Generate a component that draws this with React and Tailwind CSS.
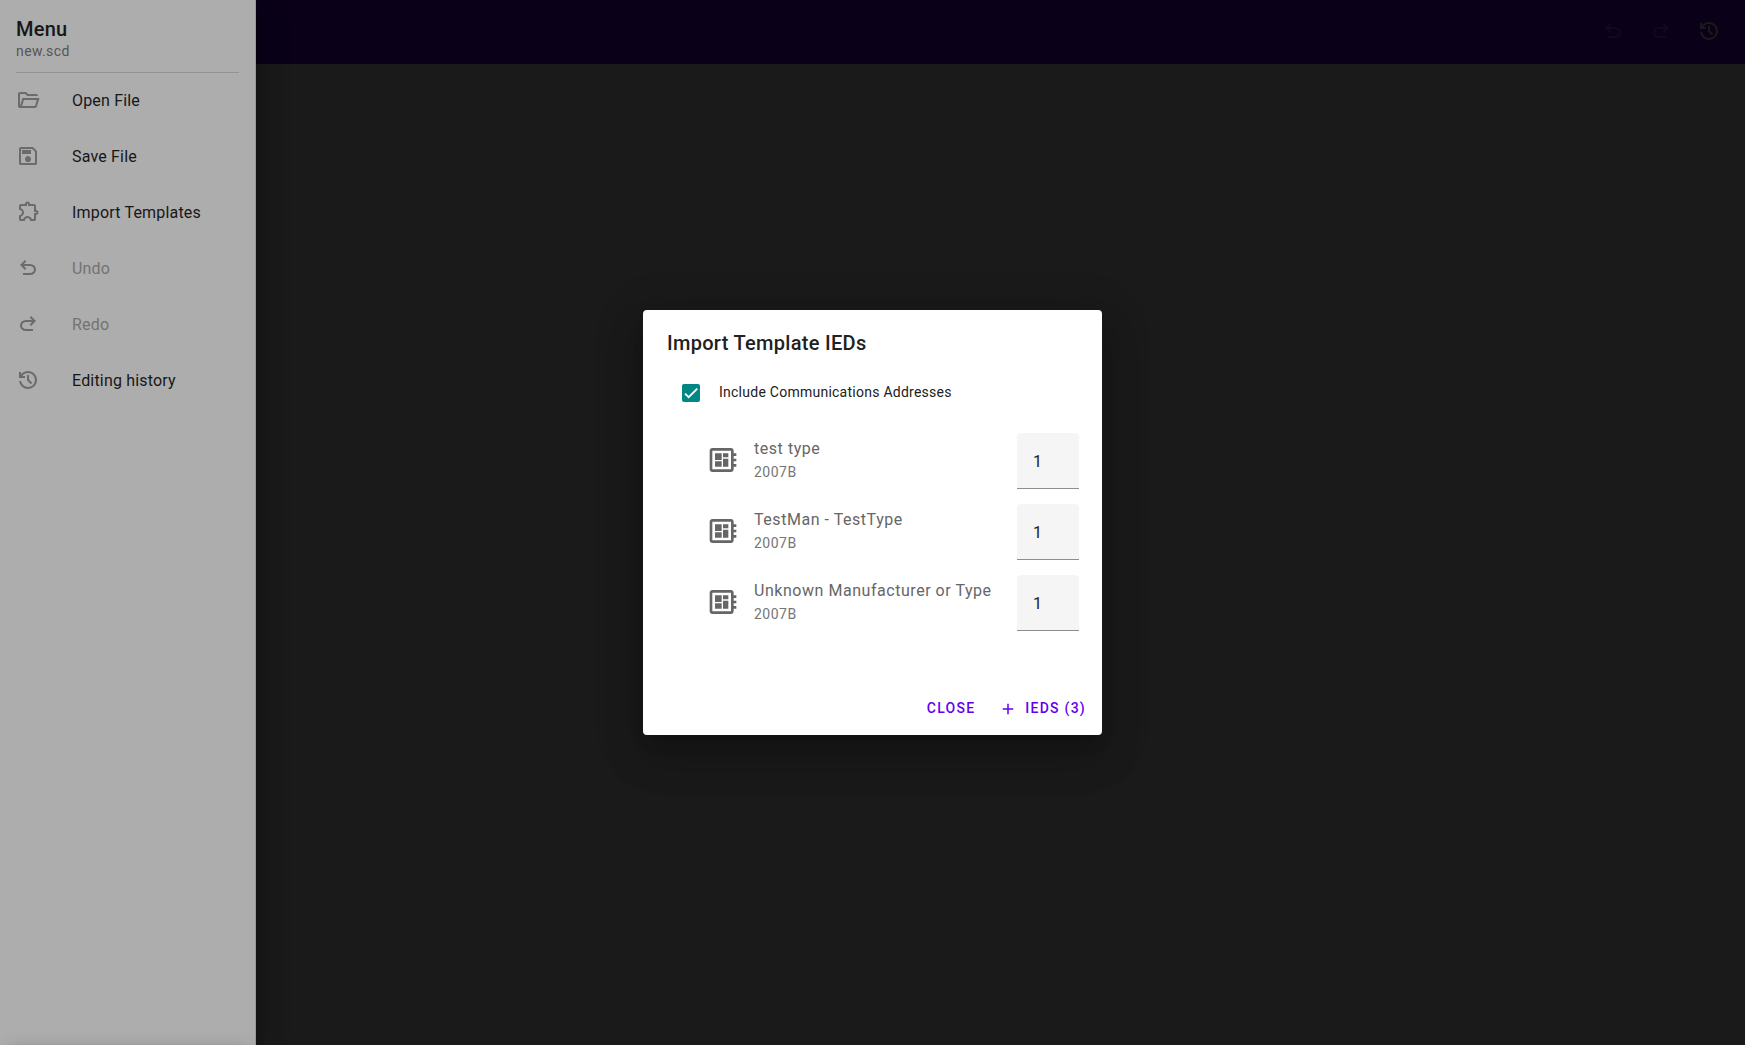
import React from 'react';

const paths = {
  folder: 'M4 20q-.825 0-1.412-.587T2 18V6q0-.825.588-1.412T4 4h6l2 2h8q.825 0 1.413.588T22 8H11.175l-2-2H4v12l2.4-8h17.1l-2.575 8.575q-.2.65-.737 1.038T19 20zm2.1-2H19l1.8-6H7.9z',
  save: 'M21 7v12q0 .825-.587 1.413T19 21H5q-.825 0-1.412-.587T3 19V5q0-.825.588-1.412T5 3h12zm-2 .85L16.15 5H5v14h14zM12 18q1.25 0 2.125-.875T15 15t-.875-2.125T12 12t-2.125.875T9 15t.875 2.125T12 18m-6-8h9V6H6z',
  extension: 'M8.8 21H5q-.825 0-1.412-.587T3 19v-3.8q1.2 0 2.1-.762T6 12.5t-.9-1.937T3 9.8V6q0-.825.588-1.412T5 4h4q0-1.05.725-1.775T11.5 1.5t1.775.725T14 4h4q.825 0 1.413.588T20 6v4q1.05 0 1.775.725T22.5 12.5t-.725 1.775T20 15v4q0 .825-.587 1.413T18 21h-3.8q0-1.25-.787-2.125T11.5 18t-1.912.875T8.8 21M5 19h2.125q.6-1.65 1.925-2.325T11.5 16t2.45.675T15.875 19H18v-6h2q.2 0 .35-.15t.15-.35t-.15-.35T20 12h-2V6h-6V4q0-.2-.15-.35t-.35-.15t-.35.15T11 4v2H5v2.2q1.35.5 2.175 1.675T8 12.5q0 1.425-.825 2.6T5 16.8z',
  undo: 'M7 19v-2h7.1q1.575 0 2.738-1T18 13.5T16.838 11T14.1 10H7.8l2.6 2.6L9 14L4 9l5-5l1.4 1.4L7.8 8h6.3q2.425 0 4.163 1.575T20 13.5t-1.737 3.925T14.1 19z',
  redo: 'M9.9 19q-2.425 0-4.163-1.575T4 13.5t1.737-3.925T9.9 8h6.3l-2.6-2.6L15 4l5 5l-5 5l-1.4-1.4l2.6-2.6H9.9q-1.575 0-2.738 1T6 13.5T7.163 16T9.9 17H17v2z',
  history: 'M12 21q-3.45 0-6.012-2.287T3.05 13H5.1q.35 2.6 2.313 4.3T12 19q2.925 0 4.963-2.037T19 12t-2.037-4.962T12 5q-1.725 0-3.225.8T6.25 8H9v2H3V4h2v2.35q1.275-1.6 3.113-2.475T12 3q1.875 0 3.513.713t2.85 1.924t1.925 2.85T21 12t-.712 3.513t-1.925 2.85t-2.85 1.925T12 21m2.8-4.8L11 12.4V7h2v4.6l3.2 3.2z',
  board: 'M22 9V7h-2V5c0-1.1-.9-2-2-2H4c-1.1 0-2 .9-2 2v14c0 1.1.9 2 2 2h14c1.1 0 2-.9 2-2v-2h2v-2h-2v-2h2v-2h-2V9zm-4 10H4V5h14zM6 13h5v4H6zm6-6h4v3h-4zM6 7h5v5H6zm6 4h4v6h-4z',
  add: 'M11 13H5v-2h6V5h2v6h6v2h-6v6h-2v-6z',
};

function Icon({ name, className }) {
  return (
    <svg viewBox="0 0 24 24" fill="currentColor" className={className}>
      <path d={paths[name]} />
    </svg>
  );
}

const menu = [
  { icon: 'folder', label: 'Open File' },
  { icon: 'save', label: 'Save File' },
  { icon: 'extension', label: 'Import Templates' },
  { icon: 'undo', label: 'Undo', disabled: true },
  { icon: 'redo', label: 'Redo', disabled: true },
  { icon: 'history', label: 'Editing history' },
];

const ieds = ['test type', 'TestMan - TestType', 'Unknown Manufacturer or Type'];

function Sidebar() {
  return (
    <aside className="flex h-full w-64 flex-col border-r border-[#989898] bg-[#adadad] shadow-[0_8px_10px_-5px_rgba(0,0,0,0.2),0_16px_24px_2px_rgba(0,0,0,0.14),0_6px_30px_5px_rgba(0,0,0,0.12)]">
      <header className="flex h-[72px] flex-col px-4 pt-[13px]">
        <h1 className="h-8 text-xl leading-8 font-medium tracking-[0.25px] text-[#171717]">Menu</h1>
        <p className="-mt-1 text-sm leading-5 tracking-[0.4px] text-[#555555]">new.scd</p>
      </header>
      <div className="mr-4 ml-4 h-px shrink-0 bg-[#929292]" />
      <nav className="flex flex-col">
        {menu.map((m) => (
          <div key={m.label} className="flex h-14 items-center px-4">
            <Icon name={m.icon} className="-mt-0.5 size-6 text-[#6b6b6b]" />
            <span className={'ml-8 text-base leading-6 tracking-[0.18px] ' + (m.disabled ? 'text-[#737373]' : 'text-[#171717]')}>
              {m.label}
            </span>
          </div>
        ))}
      </nav>
    </aside>
  );
}

function Dialog() {
  return (
    <div className="flex h-[425px] w-[459px] flex-col rounded bg-white shadow-[0_11px_15px_-7px_rgba(0,0,0,0.2),0_24px_38px_3px_rgba(0,0,0,0.14),0_9px_46px_8px_rgba(0,0,0,0.12)]">
      <h2 className="px-6 pt-[17px] text-xl leading-8 font-medium tracking-[0.3px] text-[#212121]">Import Template IEDs</h2>
      <label className="mt-[13px] flex h-10 items-center pl-[39px]">
        <span className="mt-0.5 flex size-[18px] items-center justify-center rounded-xs bg-[#018786]">
          <svg viewBox="0 0 24 24" className="size-[14px]" fill="none" stroke="white" strokeWidth="3.12">
            <path d="M1.73 12.91 8.1 19.28 22.79 4.59" />
          </svg>
        </span>
        <span className="ml-[19px] text-sm leading-5 tracking-[0.25px] text-[#212121]">Include Communications Addresses</span>
      </label>
      <div className="mt-[13px] flex flex-col">
        {ieds.map((name) => (
          <div key={name} className="flex h-[71px] items-center pr-[23px] pl-16">
            <Icon name="board" className="-mt-px size-8 text-[#666666]" />
            <div className="ml-[15px] flex flex-1 flex-col whitespace-nowrap">
              <span className="text-base leading-6 tracking-[0.54px] text-[#666666]">{name}</span>
              <span className="text-sm leading-[23px] tracking-[0.5px] text-[#767676]">2007B</span>
            </div>
            <div className="flex h-14 w-[62px] items-center rounded-t border-b border-[#8e8e8e] bg-[#f5f5f5] pt-1 pl-4">
              <span className="text-base text-[#212121]">1</span>
            </div>
          </div>
        ))}
      </div>
      <footer className="mt-auto mb-[9px] flex h-9 items-center justify-end pr-4 text-sm font-medium tracking-[1.25px] text-[#6200ee]">
        <span>CLOSE</span>
        <Icon name="add" className="mt-px ml-6 size-[18px]" />
        <span className="ml-2">IEDS (3)</span>
      </footer>
    </div>
  );
}

export default function App() {
  return (
    <div className="relative flex h-[1045px] w-[1745px] overflow-hidden bg-[#1a1a1a] font-[Roboto,sans-serif] antialiased">
      <div className="z-10">
        <Sidebar />
      </div>
      <main className="flex-1">
        <div className="flex h-16 items-center justify-end gap-6 bg-[#0a0018] pr-6 pb-0.5">
          <Icon name="undo" className="size-6 text-[#110a1b]" />
          <Icon name="redo" className="size-6 text-[#110a1b]" />
          <Icon name="history" className="size-6 text-[#1a1a1a]" />
        </div>
      </main>
      <div className="absolute top-[1045px] left-2 z-20 h-12 w-60 shadow-[0_3px_5px_-1px_rgba(0,0,0,0.2),0_6px_10px_0_rgba(0,0,0,0.14),0_1px_18px_0_rgba(0,0,0,0.12)]" />
      <div className="absolute inset-0 z-30 flex items-center justify-center">
        <Dialog />
      </div>
    </div>
  );
}
